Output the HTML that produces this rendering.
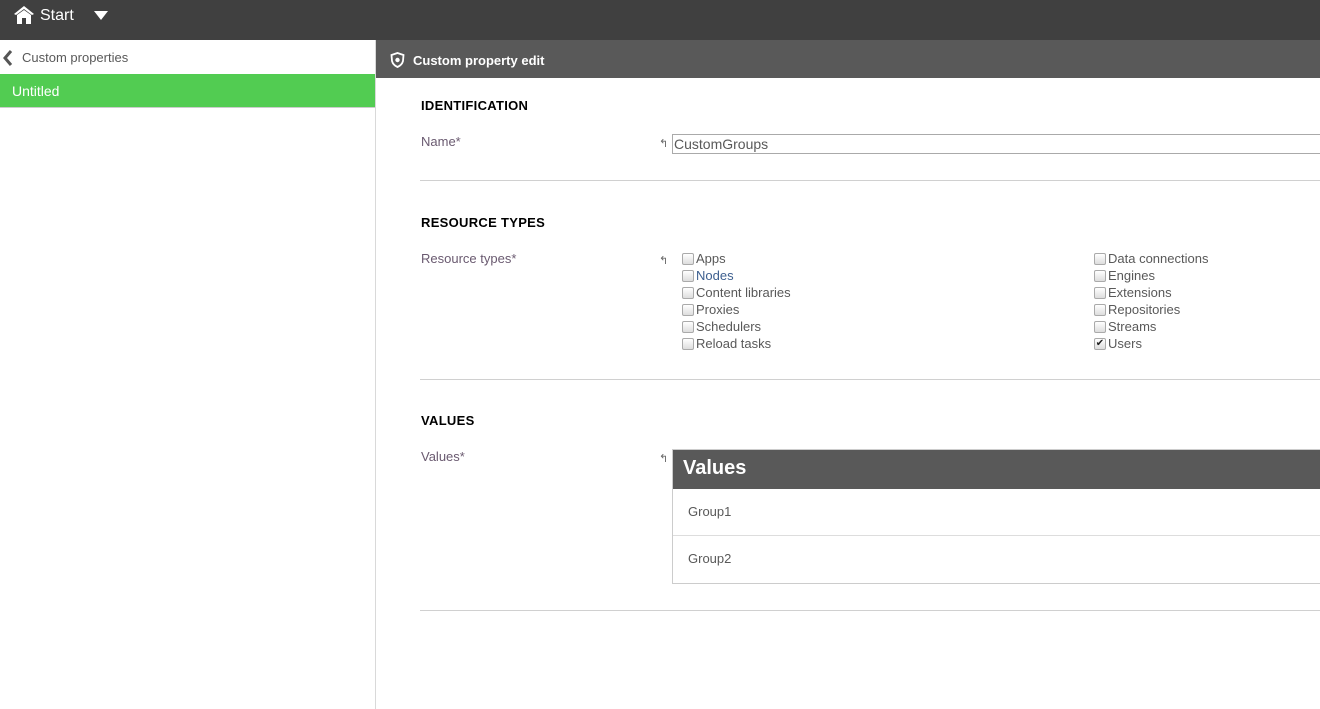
<!DOCTYPE html>
<html><head><style>
*{margin:0;padding:0;box-sizing:border-box}
body{width:1320px;height:709px;overflow:hidden;font-family:"Liberation Sans",sans-serif;background:#fff;position:relative;color:#595959}
.a{position:absolute}
.top{left:0;top:0;width:1320px;height:40px;background:#404040}
.lp{left:0;top:40px;width:376px;height:669px;border-right:1px solid #d9d9d9}
.hdr{left:376px;top:40px;width:944px;height:38px;background:#595959;color:#fff;font-weight:bold;font-size:13px}
.h{font-weight:bold;font-size:13px;color:#000;letter-spacing:0.3px}
.lbl{font-size:13px;color:#6a5a70}
.hr{height:1px;background:#d0d0d0;left:420px;width:900px}
.cb{font-size:13px;color:#595959;height:17px;line-height:17px;display:flex;align-items:center}
.cb i{display:inline-block;width:12px;height:12px;border:1px solid #aaa;border-radius:2px;background:linear-gradient(#fff,#ddd);margin-right:2px;font-style:normal;font-size:10px;line-height:10px;color:#222;text-align:center}
.undo{font-size:11px;color:#666}
</style></head><body>
<div class="a top">
 <svg class="a" style="left:13px;top:5px" width="22" height="20" viewBox="0 0 22 20"><path d="M11 1 L1 9 L3 10 L11 4 L19 10 L21 9 Z" fill="#fff"/><path d="M4 10 L11 5 L18 10 L18 19 L13 19 L13 13 L9 13 L9 19 L4 19 Z" fill="#fff"/></svg>
 <div class="a" style="left:40px;top:7px;color:#fff;font-size:16px">Start</div>
 <svg class="a" style="left:94px;top:11px" width="14" height="10"><path d="M0 0 L14 0 L7 9 Z" fill="#fff"/></svg>
</div>
<div class="a lp">
 <svg class="a" style="left:3px;top:10px" width="10" height="16"><path d="M8 1 L2 8 L8 15" stroke="#555" stroke-width="3" fill="none"/></svg>
 <div class="a" style="left:22px;top:10px;font-size:13px;color:#595959">Custom properties</div>
 <div class="a" style="left:0;top:34px;width:375px;height:34px;background:#52cc52;border-bottom:1px solid #ccc;color:#fff;font-size:14px;padding:9px 12px">Untitled</div>
</div>
<div class="a hdr">
 <svg class="a" style="left:14px;top:12px" width="15" height="16" viewBox="0 0 15 16"><path d="M7.5 1 L13.5 3 L13 9 Q12 13 7.5 15 Q3 13 2 9 L1.5 3 Z" fill="none" stroke="#fff" stroke-width="1.8"/><circle cx="7.5" cy="8" r="2.2" fill="#fff"/></svg>
 <div class="a" style="left:37px;top:13px">Custom property edit</div>
</div>
<div class="a h" style="left:421px;top:98px">IDENTIFICATION</div>
<div class="a lbl" style="left:421px;top:134px">Name*</div>
<div class="a undo" style="left:659px;top:137px">↰</div>
<div class="a" style="left:672px;top:134px;width:650px;height:20px;border:1px solid #aaa;font-size:14px;color:#595959;padding:1px 1px">CustomGroups</div>
<div class="a hr" style="top:180px"></div>
<div class="a h" style="left:421px;top:215px">RESOURCE TYPES</div>
<div class="a lbl" style="left:421px;top:251px">Resource types*</div>
<div class="a undo" style="left:659px;top:254px">↰</div>
<div class="a" style="left:682px;top:250px">
 <div class="cb"><i></i>Apps</div><div class="cb" style="color:#3d5f8f"><i></i>Nodes</div><div class="cb"><i></i>Content libraries</div><div class="cb"><i></i>Proxies</div><div class="cb"><i></i>Schedulers</div><div class="cb"><i></i>Reload tasks</div>
</div>
<div class="a" style="left:1094px;top:250px">
 <div class="cb"><i></i>Data connections</div><div class="cb"><i></i>Engines</div><div class="cb"><i></i>Extensions</div><div class="cb"><i></i>Repositories</div><div class="cb"><i></i>Streams</div><div class="cb"><i>✔</i>Users</div>
</div>
<div class="a hr" style="top:379px"></div>
<div class="a h" style="left:421px;top:413px">VALUES</div>
<div class="a lbl" style="left:421px;top:449px">Values*</div>
<div class="a undo" style="left:659px;top:452px">↰</div>
<div class="a" style="left:672px;top:449px;width:650px;height:135px;border:1px solid #ccc">
 <div style="height:39px;background:#595959;color:#fff;font-weight:bold;font-size:20px;padding:7px 10px">Values</div>
 <div style="height:47px;border-bottom:1px solid #ddd;font-size:13px;padding:15px 15px">Group1</div>
 <div style="height:47px;font-size:13px;padding:15px 15px">Group2</div>
</div>
<div class="a hr" style="top:610px"></div>
</body></html>
